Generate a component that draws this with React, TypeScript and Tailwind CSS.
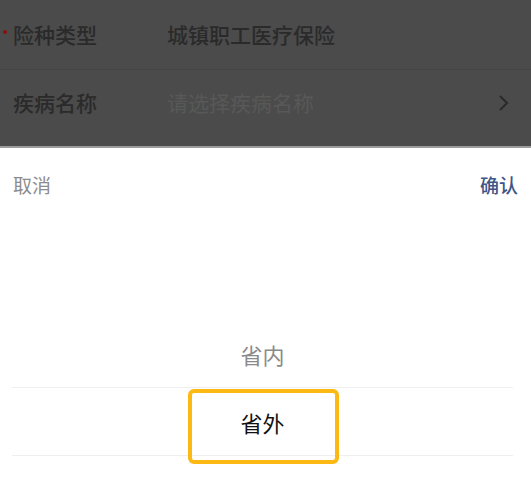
import React from "react";

export default function App() {
  const font = { fontFamily: '"Noto Sans CJK SC", "Noto Sans", sans-serif' };
  return (
    <div className="relative w-[531px] h-[481px] overflow-hidden bg-white" style={font}>
      {/* masked form behind */}
      <div className="h-[146px] bg-[#4b4b4b] flex flex-col">
        <div className="h-[70px] flex items-center border-b border-[#444444] relative">
          <span className="absolute left-[3px] top-[30px] w-[4px] h-[4px] rounded-full bg-[#8a1010]" />
          <span className="ml-[13px] w-[154px] text-[21px] font-medium text-[#2a2a2a] leading-none">险种类型</span>
          <span className="text-[21px] font-medium text-[#2a2a2a] leading-none">城镇职工医疗保险</span>
        </div>
        <div className="h-[64px] flex items-center relative">
          <span className="ml-[13px] w-[154px] text-[21px] font-medium text-[#2a2a2a] leading-none">疾病名称</span>
          <span className="text-[21px] text-[#585858] leading-none">请选择疾病名称</span>
          <svg className="absolute left-[497px] top-[24px]" width="12" height="18" viewBox="0 0 12 18">
            <path d="M3 2 L10 9 L3 16" fill="none" stroke="#2a2a2a" strokeWidth="2" />
          </svg>
        </div>
      </div>
      <div className="h-[2px] bg-[#9c9c9c]" />
      {/* picker */}
      <div className="h-[72px] flex items-center justify-between px-[13px]">
        <span className="text-[19px] text-[#8c8c8c] leading-none">取消</span>
        <span className="text-[19px] font-medium text-[#3d5687] leading-none">确认</span>
      </div>
      <div className="h-[101px]" />
      <div className="ml-[12px] mr-[18px] h-[67px] flex items-center justify-center border-b border-[#efefef]">
        <span className="text-[22px] text-[#8a8a8a] leading-none">省内</span>
      </div>
      <div className="ml-[12px] mr-[18px] h-[68px] flex items-center justify-center border-b border-[#efefef]">
        <span className="text-[22px] text-[#111111] leading-none">省外</span>
      </div>
      <div className="absolute left-[188px] top-[389px] w-[151px] h-[75px] border-[4px] border-[#fdb913] rounded-[6px]" />
    </div>
  );
}
